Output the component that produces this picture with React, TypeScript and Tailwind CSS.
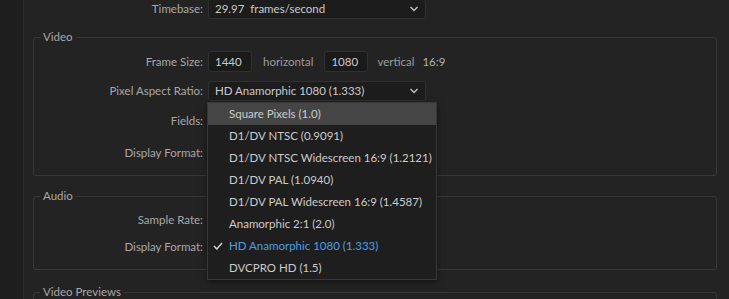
import React from 'react';

const font = { fontFamily: 'Lato, "Open Sans", sans-serif' };

function Chevron() {
  return (
    <svg width="10" height="6" viewBox="0 0 10 6" className="text-[#bdbdbd]">
      <polyline points="1.5,1 5,4.5 8.5,1" fill="none" stroke="currentColor" strokeWidth="1.5" />
    </svg>
  );
}

function Select({ value }: { value: string }) {
  return (
    <div className="flex h-[20px] w-[218px] items-center justify-between rounded-[3px] border border-[#303030] bg-[#1c1c1c] pl-[6px] pr-[6px] text-[11.5px] text-[#cacaca]">
      <span className="whitespace-pre">{value}</span>
      <Chevron />
    </div>
  );
}

function Input({ value }: { value: string }) {
  return (
    <div className="flex h-[21px] w-[44px] items-center rounded-[3px] border border-[#303030] bg-[#1a1a1a] pl-[6px] text-[11.5px] text-[#cacaca]">
      {value}
    </div>
  );
}

function Row({ label, width, children, className = '' }: { label: string; width: number; children?: React.ReactNode; className?: string }) {
  return (
    <div className={`flex items-center ${className}`}>
      <div className="shrink-0 text-right text-[11.5px] text-[#a8a8a8]" style={{ width }}>
        {label}
      </div>
      <div className="ml-[5px] flex items-center">{children}</div>
    </div>
  );
}

const pixelOptions = [
  'Square Pixels (1.0)',
  'D1/DV NTSC (0.9091)',
  'D1/DV NTSC Widescreen 16:9 (1.2121)',
  'D1/DV PAL (1.0940)',
  'D1/DV PAL Widescreen 16:9 (1.4587)',
  'Anamorphic 2:1 (2.0)',
  'HD Anamorphic 1080 (1.333)',
  'DVCPRO HD (1.5)',
];

export default function App() {
  return (
    <div className="relative flex h-[299px] w-[729px] overflow-hidden bg-[#232323]" style={font}>
      {/* left rail */}
      <div className="w-[24px] shrink-0 border-r border-[#2c2c2c] bg-[#1e1e1e]" />

      <div className="flex-1">
        {/* timebase */}
        <Row label="Timebase:" width={179} className="mt-[-1px] h-[20px]">
          <Select value="29.97  frames/second" />
        </Row>

        {/* Video */}
        <fieldset className="ml-[9px] mt-[10px] w-[684px] rounded-[3px] border border-[#383838] pb-[12px]">
          <legend className="ml-[6px] px-[3px] text-[11.5px] leading-[16px] text-[#a8a8a8]">Video</legend>
          <Row label="Frame Size:" width={169} className="mt-[6px] h-[21px]">
            <Input value="1440" />
            <span className="ml-[11px] text-[11.5px] text-[#9c9c9c]">horizontal</span>
            <div className="ml-[11px]">
              <Input value="1080" />
            </div>
            <span className="ml-[9px] text-[11.5px] text-[#9c9c9c]">vertical</span>
            <span className="ml-[8px] text-[11.5px] text-[#b4b4b4]">16:9</span>
          </Row>
          <Row label="Pixel Aspect Ratio:" width={169} className="mt-[9px] h-[20px]">
            <Select value="HD Anamorphic 1080 (1.333)" />
          </Row>
          <Row label="Fields:" width={169} className="mt-[10px] h-[20px]" />
          <Row label="Display Format:" width={169} className="mt-[12px] h-[20px]" />
        </fieldset>

        {/* Audio */}
        <fieldset className="ml-[9px] mt-[12px] w-[684px] rounded-[3px] border border-[#383838] pb-[12px]">
          <legend className="ml-[6px] px-[3px] text-[11.5px] leading-[16px] text-[#a8a8a8]">Audio</legend>
          <Row label="Sample Rate:" width={169} className="mt-[6px] h-[20px]" />
          <Row label="Display Format:" width={169} className="mt-[7px] h-[20px]" />
        </fieldset>

        {/* Video Previews */}
        <fieldset className="ml-[9px] mt-[14px] w-[684px] rounded-[3px] border border-[#383838] pb-[12px]">
          <legend className="ml-[6px] px-[3px] text-[11.5px] leading-[16px] text-[#a8a8a8]">Video Previews</legend>
          <div className="h-[40px]" />
        </fieldset>
      </div>

      {/* open dropdown */}
      <div className="absolute left-[207px] top-[102px] w-[230px] border border-[#383838] bg-[#1e1e1e] shadow-[0_2px_6px_rgba(0,0,0,0.5)]">
        {pixelOptions.map((opt, i) => {
          const checked = opt === 'HD Anamorphic 1080 (1.333)';
          return (
            <div
              key={opt}
              className={`relative flex h-[22px] items-center whitespace-nowrap pl-[21px] text-[11.5px] ${i === 0 ? 'bg-[#454545]' : ''} ${checked ? 'text-[#4a9ee6]' : 'text-[#cbcbcb]'}`}
            >
              {checked && (
                <svg width="10" height="8" viewBox="0 0 10 8" className="absolute left-[5px] top-[7px]">
                  <polyline points="1,4 3.8,7 9,1" fill="none" stroke="#cfcfcf" strokeWidth="1.5" />
                </svg>
              )}
              {opt}
            </div>
          );
        })}
      </div>
    </div>
  );
}
